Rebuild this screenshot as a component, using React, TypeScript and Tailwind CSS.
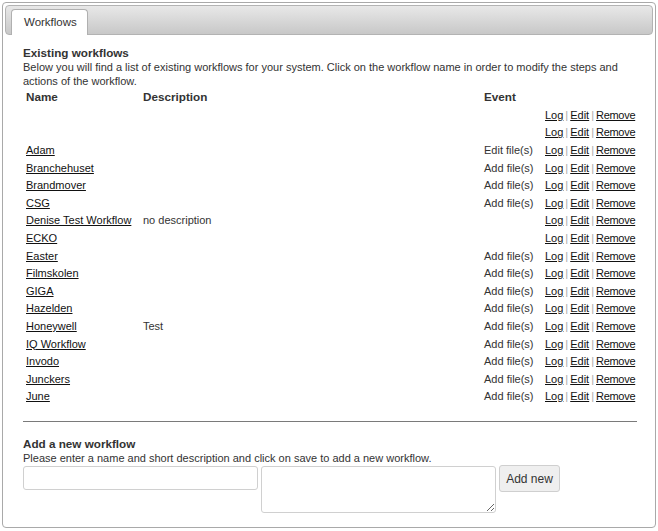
import React from "react";

const rows: { name: string; desc: string; event: string }[] = [
  { name: "", desc: "", event: "" },
  { name: "", desc: "", event: "" },
  { name: "Adam", desc: "", event: "Edit file(s)" },
  { name: "Branchehuset", desc: "", event: "Add file(s)" },
  { name: "Brandmover", desc: "", event: "Add file(s)" },
  { name: "CSG", desc: "", event: "Add file(s)" },
  { name: "Denise Test Workflow", desc: "no description", event: "" },
  { name: "ECKO", desc: "", event: "" },
  { name: "Easter", desc: "", event: "Add file(s)" },
  { name: "Filmskolen", desc: "", event: "Add file(s)" },
  { name: "GIGA", desc: "", event: "Add file(s)" },
  { name: "Hazelden", desc: "", event: "Add file(s)" },
  { name: "Honeywell", desc: "Test", event: "Add file(s)" },
  { name: "IQ Workflow", desc: "", event: "Add file(s)" },
  { name: "Invodo", desc: "", event: "Add file(s)" },
  { name: "Junckers", desc: "", event: "Add file(s)" },
  { name: "June", desc: "", event: "Add file(s)" },
];

function Actions() {
  return (
    <span className="whitespace-nowrap">
      <a className="underline text-[#111] cursor-pointer">Log</a>
      <span className="text-[#aaa] mx-[2px]">|</span>
      <a className="underline text-[#111] cursor-pointer">Edit</a>
      <span className="text-[#aaa] mx-[2px]">|</span>
      <a className="underline text-[#111] cursor-pointer tracking-[-0.3px]">Remove</a>
    </span>
  );
}

export default function App() {
  return (
    <div
      className="w-[658px] h-[531px] bg-white pt-[2px] pl-[2px] text-[11px] text-[#333]"
      style={{ fontFamily: '"Liberation Sans", Arial, sans-serif' }}
    >
      <div className="w-[654px] h-[526px] border border-[#a9a9a9] rounded-[4px] p-[2px] flex flex-col">
        {/* header bar */}
        <div className="h-[30px] rounded-[4px] border border-[#b3b3b3] bg-gradient-to-b from-[#e8e8e8] to-[#c8c8c8] flex items-end pl-[5px]">
          <div className="h-[26px] w-[77px] bg-white border border-b-0 border-[#b0b0b0] rounded-t-[4px] -mb-px flex items-center pl-[12px] text-[#333] text-[11.5px]">
            Workflows
          </div>
        </div>

        {/* content */}
        <div className="pl-[18px] pr-[16px] pt-[11px]">
          <div className="font-bold leading-[14px] text-[11.7px]">Existing workflows</div>
          <div className="leading-[14px]">
            Below you will find a list of existing workflows for your system. Click on the workflow name in order to modify the steps and
            actions of the workflow.
          </div>
          <table className="w-[614px] table-fixed border-collapse">
            <colgroup>
              <col className="w-[117px]" />
              <col className="w-[341px]" />
              <col className="w-[61px]" />
              <col className="w-[95px]" />
            </colgroup>
            <thead>
              <tr className="h-[18px]">
                <th className="text-left font-bold px-[3px] text-[11.7px]">Name</th>
                <th className="text-left font-bold px-[3px] text-[11.7px]">Description</th>
                <th className="text-left font-bold px-[3px] text-[11.7px]">Event</th>
                <th className="text-left font-bold px-[3px]"></th>
              </tr>
            </thead>
            <tbody>
              {rows.map((r, i) => (
                <tr key={i} className="h-[17.6px]">
                  <td className="px-[3px] py-0 whitespace-nowrap leading-[14px]">
                    {r.name && <a className="underline text-[#111] cursor-pointer">{r.name}</a>}
                  </td>
                  <td className="px-[3px] py-0 leading-[14px]">{r.desc}</td>
                  <td className="px-[3px] py-0 whitespace-nowrap leading-[14px]">{r.event}</td>
                  <td className="px-[3px] py-0 leading-[14px]">
                    <Actions />
                  </td>
                </tr>
              ))}
            </tbody>
          </table>

          <div className="w-[614px] border-t border-[#7a7a7a] mt-[16px]"></div>

          <div className="font-bold leading-[14px] mt-[15px] text-[11.7px]">Add a new workflow</div>
          <div className="leading-[14px]">Please enter a name and short description and click on save to add a new workflow.</div>
          <div className="flex items-start gap-[3px] mt-[1px]">
            <input
              type="text"
              className="w-[235px] h-[24px] border border-[#d0d0d0] rounded-[3px] outline-none px-1"
            />
            <textarea className="w-[235px] h-[47px] border border-[#d0d0d0] rounded-[3px] outline-none px-1" />
            <button className="w-[61px] h-[27px] -mt-px border border-[#cfcfcf] rounded-[3px] bg-[#efefef] text-[#333] text-[12px]">
              Add new
            </button>
          </div>
        </div>
      </div>
    </div>
  );
}
